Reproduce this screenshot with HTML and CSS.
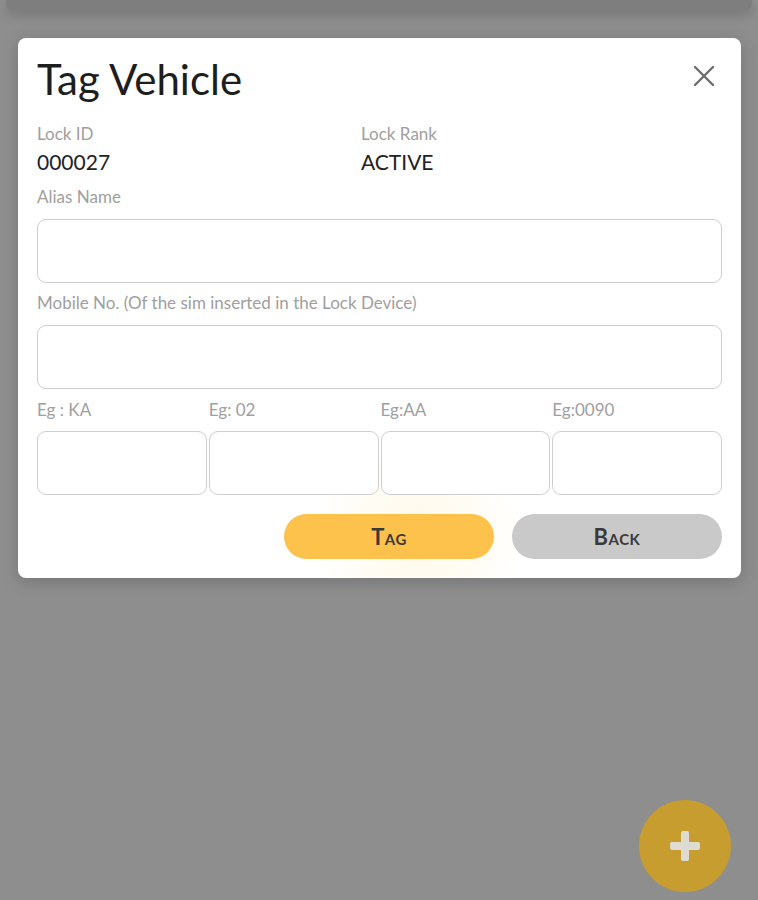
FILE: index.html
```html
<!DOCTYPE html>
<html lang="en">
<head>
<meta charset="utf-8">
<title>Tag Vehicle</title>
<link rel="stylesheet" href="styles.css">
</head>
<body>
<div class="screen">
  <div class="back-card"></div>
  <div class="modal">
    <div class="modal-head">
      <h1 class="title">Tag Vehicle</h1>
      <button class="close" aria-label="Close">
        <svg width="22" height="22" viewBox="0 0 22 22"><path d="M2 2 L20 20 M20 2 L2 20" stroke="#6e6e6e" stroke-width="2.4" stroke-linecap="round" fill="none"/></svg>
      </button>
    </div>
    <div class="info">
      <div class="info-item">
        <div class="label">Lock ID</div>
        <div class="value">000027</div>
      </div>
      <div class="info-item">
        <div class="label">Lock Rank</div>
        <div class="value">ACTIVE</div>
      </div>
    </div>
    <div class="label field-label">Alias Name</div>
    <div class="input"></div>
    <div class="label field-label mobile-label">Mobile No. (Of the sim inserted in the Lock Device)</div>
    <div class="input"></div>
    <div class="plate">
      <div class="plate-col"><div class="label field-label">Eg : KA</div><div class="input"></div></div>
      <div class="plate-col"><div class="label field-label">Eg: 02</div><div class="input"></div></div>
      <div class="plate-col"><div class="label field-label">Eg:AA</div><div class="input"></div></div>
      <div class="plate-col"><div class="label field-label">Eg:0090</div><div class="input"></div></div>
    </div>
    <div class="actions">
      <button class="btn btn-tag">Tag</button>
      <button class="btn btn-back">Back</button>
    </div>
  </div>
  <div class="fab"><span class="plus-h"></span><span class="plus-v"></span></div>
</div>
</body>
</html>
```

FILE: styles.css
```css
* { box-sizing: border-box; }
html, body { margin: 0; padding: 0; }
body {
  background: #8e8e8e;
  font-family: Lato, "Noto Sans", sans-serif;
  width: 758px;
  height: 900px;
  overflow: hidden;
}
.screen {
  position: relative;
  width: 758px;
  height: 900px;
  display: flex;
  flex-direction: column;
}
.back-card {
  height: 10px;
  margin: 0 6px;
  background: #7e7e7e;
  border-radius: 0 0 6px 6px;
  box-shadow: 0 5px 12px rgba(0,0,0,0.18);
}
.modal {
  margin: 28px 0 0 18px;
  width: 723px;
  background: #fff radial-gradient(circle at 400px 500px, rgba(255,214,110,0.16), rgba(255,214,110,0) 110px);
  border-radius: 8px;
  padding: 17px 19px 19px 19px;
  box-shadow: 0 4px 18px rgba(0,0,0,0.18);
}
.modal-head {
  display: flex;
  justify-content: space-between;
  align-items: flex-start;
}
.title {
  margin: 0;
  font-size: 42px;
  line-height: 48px;
  font-weight: 400;
  color: #1e1e1e;
}
.close {
  border: 0;
  background: none;
  padding: 0;
  margin: 10px 7px 0 0;
  width: 22px;
  height: 22px;
}
.close svg { display: block; }
.info {
  display: grid;
  grid-template-columns: 324px 1fr;
  margin-top: 21px;
}
.label {
  font-size: 17px;
  line-height: 20px;
  color: #a0a0a0;
}
.value {
  margin-top: 5px;
  font-size: 21px;
  line-height: 26px;
  color: #222;
}
.field-label { margin-top: 12px; }
.mobile-label { margin-top: 10px; }
.input {
  margin-top: 11px;
  height: 64px;
  border: 1.5px solid #cfcfcf;
  border-radius: 9px;
  background: #fff;
}
.field-label + .input { margin-top: 12px; }
.plate {
  display: grid;
  grid-template-columns: repeat(4, 1fr);
  column-gap: 2px;
}
.plate .field-label { margin-top: 11px; }
.plate .input { margin-top: 11px; }
.actions {
  display: flex;
  justify-content: flex-end;
  gap: 18px;
  margin-top: 19px;
}
.btn {
  width: 210px;
  height: 45px;
  border: 0;
  border-radius: 23px;
  font-family: Lato, "Noto Sans", sans-serif;
  font-size: 22px;
  font-weight: 700;
  font-variant: small-caps;
  color: #3a3a3a;
  letter-spacing: 0.5px;
}
.btn-tag { background: #fdc24b; }
.btn-back { background: #c9c9c9; }
.fab {
  position: absolute;
  left: 639px;
  top: 800px;
  width: 92px;
  height: 92px;
  border-radius: 50%;
  background: #c79d30;
}
.plus-h, .plus-v {
  position: absolute;
  background: #dedbd2;
  border-radius: 2px;
}
.plus-h { left: 31px; top: 42px; width: 30px; height: 8px; }
.plus-v { left: 42px; top: 31px; width: 8px; height: 30px; }
```
